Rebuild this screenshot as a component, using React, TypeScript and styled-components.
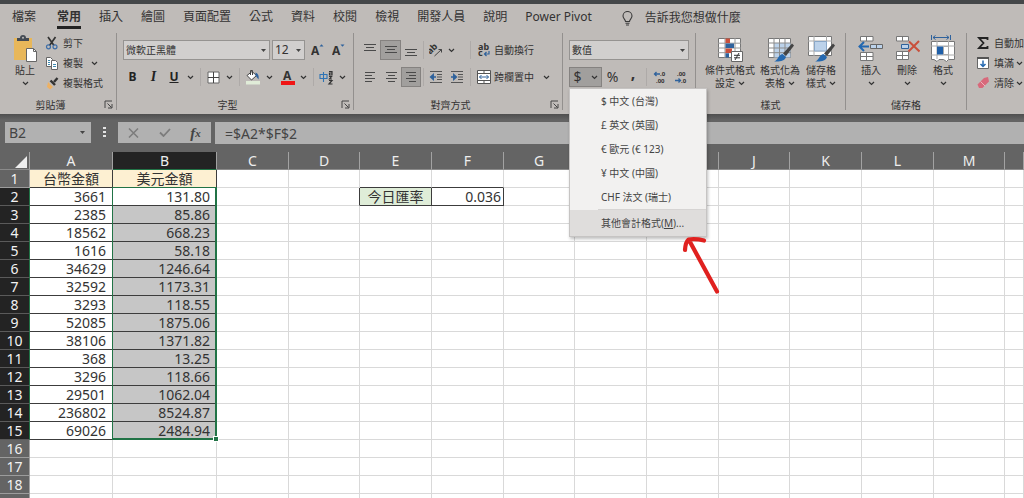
import React from 'react';
import styled, { createGlobalStyle } from 'styled-components';

const GlobalStyle = createGlobalStyle`
  * { box-sizing: border-box; }
  body {
    margin: 0;
    background: #ffffff;
    font-family: "Noto Sans", "Noto Sans CJK TC", sans-serif;
  }
  button, input, select {
    font-family: inherit;
    color: inherit;
    margin: 0;
  }
`;

const ink = '#333232';
const green = '#217346';

/* ---------- shell ---------- */

const Window = styled.div`
  position: relative;
  height: 100vh;
  overflow: hidden;
  display: flex;
  flex-direction: column;
  background: #ffffff;
`;

const TitleStrip = styled.div`
  flex: none;
  height: 4px;
  background: #444749;
`;

const TabBar = styled.nav`
  flex: none;
  display: flex;
  align-items: center;
  gap: 18px;
  height: 28px;
  padding-left: 12px;
  background: #bfbbb8;
  color: ${ink};
`;

const Tab = styled.button<{ $active?: boolean }>`
  border: 0;
  border-bottom: 3px solid ${p => (p.$active ? '#222222' : 'transparent')};
  background: none;
  padding: 0;
  height: 22px;
  line-height: 18px;
  font-size: 12px;
  font-weight: ${p => (p.$active ? 700 : 400)};
  white-space: nowrap;
  &:first-child { margin-right: 3px; }
`;

const TellMe = styled.button`
  display: flex;
  align-items: center;
  gap: 12px;
  border: 0;
  background: none;
  padding: 0;
  margin-left: 12px;
  font-size: 12px;
  line-height: 18px;
  height: 22px;
  white-space: nowrap;
`;

/* ---------- ribbon ---------- */

const Ribbon = styled.div`
  flex: none;
  display: flex;
  height: 82px;
  padding: 1px 0 4px;
  background: #bfbbb8;
  color: ${ink};
  font-size: 10px;
`;

const Group = styled.section<{ $w?: number }>`
  flex: ${p => (p.$w ? 'none' : '1')};
  width: ${p => (p.$w ? `${p.$w}px` : 'auto')};
  min-width: 0;
  display: flex;
  flex-direction: column;
  justify-content: space-between;
  border-right: ${p => (p.$w ? '1px solid #93908e' : '0')};
`;

const GroupFoot = styled.div`
  display: flex;
  align-items: center;
  height: 10px;
  line-height: 10px;
  span { flex: 1; text-align: center; }
`;

const Launcher = styled.button`
  flex: none;
  width: 15px;
  height: 10px;
  border: 0;
  padding: 0;
  background: none;
  display: flex;
  justify-content: center;
`;

const BigRow = styled.div<{ $pad: number }>`
  display: flex;
  align-items: flex-start;
  padding: 2px 0 0 ${p => p.$pad}px;
`;

const BigButton = styled.button<{ $w: number }>`
  flex: none;
  width: ${p => p.$w}px;
  display: flex;
  flex-direction: column;
  align-items: center;
  border: 0;
  padding: 0;
  background: none;
  font-size: 10px;
  line-height: 13px;
  white-space: nowrap;
  > svg { margin-bottom: 2px; }
`;

const Line = styled.span`
  display: flex;
  align-items: center;
  justify-content: center;
  gap: 3px;
  height: 13px;
`;

const ClipboardBody = styled.div`
  display: flex;
  padding-left: 6px;
`;

const PasteWrap = styled.div`
  padding-top: 2px;
`;

const SmallList = styled.div<{ $pad?: number }>`
  display: flex;
  flex-direction: column;
  padding-left: ${p => p.$pad || 0}px;
`;

const SmallButton = styled.button<{ $gap?: number }>`
  display: flex;
  align-items: center;
  height: 20px;
  border: 0;
  padding: 0;
  background: none;
  font-size: 10px;
  line-height: 20px;
  white-space: nowrap;
  > svg:first-child { margin-right: 3px; flex: none; }
  > svg:last-child:not(:first-child) { margin-left: ${p => p.$gap || 0}px; }
`;

const Rows = styled.div`
  display: flex;
  flex-direction: column;
  gap: 7px;
  padding: 7px 0 0 6px;
`;

const Row = styled.div`
  display: flex;
  align-items: center;
  height: 20px;
`;

const Tool = styled.button<{ $w?: number; $on?: boolean }>`
  flex: none;
  display: flex;
  align-items: center;
  justify-content: center;
  width: ${p => (p.$w ? `${p.$w}px` : 'auto')};
  height: 20px;
  padding: 0;
  border: 1px solid ${p => (p.$on ? '#858280' : 'transparent')};
  background: ${p => (p.$on ? '#a19f9d' : 'none')};
  font-size: 12px;
  line-height: 18px;
  b, i, u { font-weight: 700; color: #222222; }
  i { font-family: "Liberation Serif", serif; font-size: 14px; }
`;

const Labelled = styled(Tool)`
  font-size: 10px;
  gap: 3px;
  white-space: nowrap;
  > svg:nth-of-type(2) { margin-left: 6px; }
`;

const Currency = styled(Tool)`
  font-size: 14px;
  gap: 9px;
`;

const Percent = styled(Tool)`
  font-size: 14px;
`;

const Comma = styled(Tool)`
  align-items: flex-start;
  font-size: 16px;
  font-weight: 700;
  line-height: 10px;
`;

const Sep = styled.span<{ $l?: number; $r?: number }>`
  flex: none;
  width: 1px;
  height: 18px;
  margin: 0 ${p => p.$r ?? 3}px 0 ${p => p.$l ?? 3}px;
  background: #aeaaa8;
`;

const Combo = styled.label<{ $w: number }>`
  flex: none;
  position: relative;
  display: flex;
  align-items: center;
  width: ${p => p.$w}px;
  height: 20px;
  border: 1px solid #959391;
  background: #d1cfce;
  margin-right: 2px;
  select {
    appearance: none;
    flex: 1;
    width: 100%;
    height: 18px;
    border: 0;
    padding: 0 12px 0 2px;
    background: transparent;
    line-height: 18px;
  }
  svg { position: absolute; right: 3px; pointer-events: none; }
`;
const FaceSelect = styled.select` font-size: 10px; `;
const SizeSelect = styled.select` font-size: 12px; `;

/* ---------- currency menu ---------- */

const MenuAnchor = styled.div`
  position: relative;
  flex: none;
`;

const Menu = styled.div`
  position: absolute;
  z-index: 10;
  top: 21px;
  left: 0;
  width: 138px;
  border: 1px solid #c6c4c3;
  background: #f2f1f0;
  box-shadow: 1px 2px 3px rgba(0, 0, 0, 0.25);
  color: #444444;
`;

const MenuItem = styled.button<{ $hot?: boolean }>`
  display: block;
  width: 100%;
  height: ${p => (p.$hot ? 26 : 24)}px;
  border: 0;
  padding: 0 0 0 31px;
  background: ${p => (p.$hot ? '#dfdddc' : 'transparent')};
  text-align: left;
  font-size: 10px;
  line-height: 24px;
  white-space: nowrap;
`;

const MenuRule = styled.div`
  height: 1px;
  margin-left: 28px;
  background: #d6d4d3;
`;

/* ---------- formula bar ---------- */

const FormulaBar = styled.div`
  flex: none;
  display: flex;
  align-items: center;
  height: 38px;
  padding: 8px 0 9px 5px;
  background: linear-gradient(#4f4f4f, #646464 6px);
  color: #444444;
`;

const NameBox = styled.div`
  position: relative;
  width: 86px;
  height: 21px;
  display: flex;
  align-items: center;
  background: #b1b1b1;
  svg { position: absolute; right: 6px; }
`;

const Field = styled.input`
  width: 100%;
  height: 21px;
  border: 0;
  padding: 0 4px;
  outline: 0;
  background: transparent;
  font-size: 14px;
  line-height: 20px;
`;

const Grip = styled.div`
  flex: none;
  width: 27px;
  display: flex;
  justify-content: center;
`;

const FxBox = styled.div`
  flex: none;
  display: flex;
  align-items: center;
  width: 93px;
  height: 21px;
  background: #b1b1b1;
  margin-right: 4px;
`;

const FxButton = styled.button`
  flex: 1;
  display: flex;
  justify-content: center;
  align-items: center;
  height: 21px;
  border: 0;
  padding: 0;
  background: none;
  font: italic 700 15px/20px "Liberation Serif", serif;
  sub { font-size: 11px; line-height: 10px; vertical-align: baseline; }
`;

const FormulaField = styled.div`
  flex: 1;
  background: #b1b1b1;
  padding-left: 6px;
`;

/* ---------- sheet ---------- */

const Sheet = styled.table`
  flex: none;
  table-layout: fixed;
  width: 100%;
  border-collapse: separate;
  border-spacing: 0;
  color: #333333;
  font-size: 14px;
  line-height: 17px;
`;

const SizedCol = styled.col<{ $w: number }>`
  width: ${p => p.$w}px;
`;

const ColHead = styled.th<{ $on?: boolean }>`
  height: 18px;
  padding: 0;
  font-weight: 400;
  color: #eeeeee;
  background: ${p => (p.$on ? '#232323' : '#646464')};
  border-right: 1px solid #a2a2a2;
  border-bottom: 1px solid ${p => (p.$on ? green : '#8a8a8a')};
  overflow: hidden;
`;

const Corner = styled(ColHead)`
  svg { display: block; margin: 3px 2px 0 auto; }
`;

const RowHead = styled.th<{ $on?: boolean }>`
  height: 18px;
  padding: 0;
  font-weight: 400;
  color: #f2f2f2;
  background: ${p => (p.$on ? '#232323' : '#646464')};
  border-right: 1px solid ${p => (p.$on ? green : '#a2a2a2')};
  border-bottom: 1px solid ${p => (p.$on ? '#5a5a5a' : '#9c9c9c')};
`;

const Cell = styled.td<{ $fill?: string; $right?: boolean; $bottom?: boolean; $center?: boolean; $pad?: number }>`
  position: relative;
  height: 18px;
  padding: 0 ${p => (p.$center ? 0 : p.$pad ?? 6)}px 0 0;
  text-align: ${p => (p.$center ? 'center' : 'right')};
  background: ${p => p.$fill || '#ffffff'};
  border-right: 1px solid ${p => (p.$right ? '#3c3c3c' : '#d9d9d9')};
  border-bottom: 1px solid ${p => (p.$bottom ? '#3c3c3c' : '#d9d9d9')};
  white-space: nowrap;
`;

const Selection = styled.div`
  position: absolute;
  z-index: 2;
  top: -1px;
  left: -1px;
  right: -1px;
  height: 253px;
  border: 1px solid ${green};
  border-right-width: 2px;
  border-bottom-width: 2px;
  pointer-events: none;
  &::after {
    content: '';
    position: absolute;
    right: -3px;
    bottom: -3px;
    width: 4px;
    height: 4px;
    background: ${green};
    outline: 1px solid #ffffff;
  }
`;

const Annotation = styled.svg`
  position: absolute;
  z-index: 20;
  left: 680px;
  top: 230px;
  pointer-events: none;
`;

/* ---------- icons ---------- */

const Digits = styled.text` font: 700 6px "Noto Sans", sans-serif; fill: #333; `;
const Letters = styled.text` font: 700 9px "Noto Sans", sans-serif; fill: #333; `;
const Capital = styled.text` font: 700 12px "Noto Sans", sans-serif; fill: #333; `;

const Chevron = () => (
  <svg width="7" height="5" viewBox="0 0 7 5"><path d="M1 1l2.500 2.500L6 1" fill="none" stroke="#333" strokeWidth="1.200" /></svg>
);
const Caret = () => (
  <svg width="5" height="3" viewBox="0 0 5 3"><path d="M0 0h5L2.500 3z" fill="#444" /></svg>
);
const LauncherIcon = () => (
  <svg width="9" height="9" viewBox="0 0 9 9"><path d="M1 8V1h7M3.500 3.500l4 4M8 4v4H4" fill="none" stroke="#444" /></svg>
);
const Bulb = () => (
  <svg width="11" height="15" viewBox="0 0 11 15"><path d="M3.500 10.500C3.500 8.500 1 7.500 1 5a4.500 4.500 0 0 1 9 0c0 2.500-2.500 3.500-2.500 5.500zM3.500 12.300h4M4 14h3" fill="none" stroke="#3a3a3a" strokeWidth="1.100" /></svg>
);
const PasteIcon = () => (
  <svg width="26" height="27" viewBox="0 0 26 27">
    <rect x="2" y="3" width="18" height="22" fill="#e8b75a" />
    <path d="M5 6V3h3a3 3 0 0 1 6 0h3v3z" fill="#444b54" />
    <circle cx="11" cy="2.800" r="1" fill="#bfbbb8" />
    <path d="M14.500 13.500h7l3 3v10h-10z" fill="#fff" stroke="#666" />
    <path d="M21.500 13.500v3h3" fill="none" stroke="#666" />
  </svg>
);
const CutIcon = () => (
  <svg width="16" height="14" viewBox="0 0 16 14">
    <path d="M4 1l6 8.500M11.500 1l-6 8.500" stroke="#333" strokeWidth="1.700" />
    <circle cx="4.500" cy="10.800" r="2" fill="none" stroke="#3e6ea8" strokeWidth="1.200" />
    <circle cx="11" cy="10.800" r="2" fill="none" stroke="#3e6ea8" strokeWidth="1.200" />
  </svg>
);
const CopyIcon = () => (
  <svg width="16" height="14" viewBox="0 0 16 14">
    <path d="M2.500 1.500h4l2 2v7h-6z" fill="#fff" stroke="#666" />
    <path d="M7.500 4.500h4l2 2v7h-6z" fill="#fff" stroke="#666" />
    <path d="M4 4.500h2M4 6.500h2M4 8.500h2M9 8.500h3M9 10.500h3" stroke="#3e8ab0" />
  </svg>
);
const PainterIcon = () => (
  <svg width="16" height="14" viewBox="0 0 16 14">
    <path d="M4 6l5 5-3 2.500L3 11z" fill="#eeb163" />
    <path d="M6.500 4.500l4.500 4.500" stroke="#333" strokeWidth="2.400" />
    <path d="M10 6l3.500-4" stroke="#333" strokeWidth="2.400" />
  </svg>
);
const GrowFont = ({ down }: { down?: boolean }) => (
  <svg width="13" height="14" viewBox="0 0 13 14">
    <Capital x="0" y="12">A</Capital>
    <path d={down ? 'M8.500 1.500h4l-2 2.200z' : 'M8.500 3.500h4l-2-2.200z'} fill="#2f629c" />
  </svg>
);
const BorderIcon = () => (
  <svg width="13" height="13" viewBox="0 0 13 13"><path d="M1 1h11v11H1z" fill="#fff" stroke="#666" /><path d="M6.500 1v11M1 6.500h11" stroke="#444" /></svg>
);
const FillIcon = () => (
  <svg width="15" height="16" viewBox="0 0 15 16">
    <path d="M2 6.500l5-4 4.500 4-5 4.500z" fill="#fff" stroke="#444" />
    <path d="M5.500 6V1.500h2V6" fill="none" stroke="#444" />
    <path d="M10.500 3.500q4 1.500 3 7l-3-4z" fill="#2f629c" />
    <rect x="1" y="12" width="14" height="3.500" fill="#e0ecd8" />
  </svg>
);
const FontColorIcon = () => (
  <svg width="15" height="16" viewBox="0 0 15 16">
    <Capital x="3" y="11">A</Capital>
    <rect x="1" y="12" width="14" height="4" fill="#f01515" />
  </svg>
);
const PhoneticIcon = () => (
  <svg width="15" height="15" viewBox="0 0 15 15">
    <path d="M1 4.500h7v4H1zM4.500 2v10" fill="none" stroke="#2f74b5" strokeWidth="1.100" />
    <path d="M10 1.500h3V5h-2.500V3H13M10 6.500h2.500L10.500 9H13M10 10.500h3l-3 3.500h3.500" fill="none" stroke="#333" strokeWidth="1.200" />
  </svg>
);
const AlignIcon = ({ lines, y }: { lines: [number, number][]; y: number }) => (
  <svg width="14" height="14" viewBox="0 0 14 14">
    {lines.map(([a, b], i) => <path key={i} d={`M${a} ${y + i * 3}H${b}`} stroke="#4a4a4a" />)}
  </svg>
);
const OrientIcon = () => (
  <svg width="14" height="14" viewBox="0 0 14 14">
    <g transform="rotate(-45 4 9)"><Letters x="0" y="9">ab</Letters></g>
    <path d="M5.500 13l7-6.500M9.500 6.500h3v3" fill="none" stroke="#444" />
  </svg>
);
const IndentIcon = ({ out }: { out?: boolean }) => (
  <svg width="14" height="14" viewBox="0 0 14 14">
    <path d="M1 1.500h12M8 4.500h5M8 7h5M8 9.500h5M1 12.500h12" stroke="#555" />
    <path d={out ? 'M7 7H2M4.300 4.500L1.500 7l2.800 2.500z' : 'M1 7h5M3.700 4.500L6.500 7l-2.800 2.500z'} fill="#2f629c" stroke="#2f629c" strokeWidth="1.300" />
  </svg>
);
const WrapIcon = () => (
  <svg width="14" height="14" viewBox="0 0 14 14">
    <Letters x="1" y="7">ab</Letters>
    <Letters x="1" y="13">c</Letters>
    <path d="M12 8v3H7.500M9.500 9l-2 2 2 2" fill="none" stroke="#2f629c" strokeWidth="1.200" />
  </svg>
);
const MergeIcon = () => (
  <svg width="14" height="14" viewBox="0 0 14 14">
    <path d="M.5.500h13v13H.500z" fill="#fff" stroke="#555" />
    <path d="M.5 3.500h13M.5 10.500h13M7 .5v3M7 10.500v3" stroke="#555" />
    <path d="M2.500 7h9M4.500 5L2.500 7l2 2M9.500 5l2 2-2 2" fill="none" stroke="#2f629c" />
  </svg>
);
const DecimalIcon = ({ more }: { more?: boolean }) => (
  <svg width="14" height="14" viewBox="0 0 14 14">
    <Digits x={more ? 7 : 3} y="6">{more ? '.0' : '.00'}</Digits>
    <Digits x={more ? 3 : 7} y="13">{more ? '.00' : '.0'}</Digits>
    <path d={more ? 'M7 4H1.500M3.500 2L1.500 4l2 2' : 'M1 10.500h5.500M4.500 8.500l2 2-2 2'} fill="none" stroke="#2f629c" strokeWidth="1.300" />
  </svg>
);
const CondIcon = () => (
  <svg width="26" height="27" viewBox="0 0 26 27">
    <path d="M1.500 3.500h22v19h-22z" fill="#fff" stroke="#777" />
    <path d="M1 8.200h23M1 13h23M1 17.700h23M8 3v20M18 3v20" stroke="#999" />
    <path d="M8.500 3.500H13v4.500H8.500zM8.500 13.500H15v4.500H8.500z" fill="#c9503c" />
    <path d="M8.500 8.500H17v4.500H8.500zM8.500 18.200H12v4.300H8.500z" fill="#2f629c" />
    <path d="M14.500 16.500h11v10h-11z" fill="#fff" stroke="#666" />
    <path d="M17 20.300h6M17 22.800h6M22 18l-4 7" stroke="#333" />
  </svg>
);
const Brush = () => (
  <g>
    <path d="M26 8.500l2 2-8 10.500-3-2.500z" fill="#444" />
    <path d="M16.500 19l3.500 3c-1.500 4-6 5-12 4.500 4-1 4-6.500 8.500-7.500z" fill="#2468b0" />
  </g>
);
const TableIcon = () => (
  <svg width="28" height="27" viewBox="0 0 28 27">
    <path d="M2.500 3.500h22v19h-22z" fill="#fff" stroke="#777" />
    <path d="M8 8h16.500v14.500H8z" fill="#bcd2ea" />
    <path d="M2 8h23M2 13h23M2 17.700h23M8 3v20M13.500 3v20M19 3v20" stroke="#8b8b8b" />
    <Brush />
  </svg>
);
const CellStyleIcon = () => (
  <svg width="28" height="27" viewBox="0 0 28 27">
    <path d="M1.500 1.500h23v19h-23z" fill="#fff" stroke="#777" />
    <path d="M1 6h24M1 16h24M7 1v20M19.500 1v20" stroke="#aaa" />
    <path d="M7.500 6.500h12v9.500h-12z" fill="#bcd2ea" stroke="#8aa7c7" />
    <Brush />
  </svg>
);
const InsertIcon = () => (
  <svg width="26" height="27" viewBox="0 0 26 27">
    <g fill="#fff" stroke="#777"><path d="M2.500 1.500h12.500v4.500H2.500zM2.500 17.500h12.500v8H2.500z" /><path d="M8.500 1.500v4.500M8.500 17.500v8M2.500 21.500H15" /></g>
    <path d="M12.500 9.500h12v4h-12z" fill="#bcd2ea" stroke="#666" /><path d="M18.500 9.500v4" stroke="#666" />
    <path d="M11 11.500H2M6 7l-4.500 4.500L6 16" fill="none" stroke="#2468b0" strokeWidth="2" />
  </svg>
);
const DeleteIcon = () => (
  <svg width="26" height="27" viewBox="0 0 26 27">
    <g fill="#fff" stroke="#777"><path d="M2.500 1.500h12v4.500h-12zM2.500 16.500h12v8h-12z" /><path d="M8.500 1.500v4.500M8.500 16.500v8M2.500 20.500h12" /></g>
    <path d="M7.500 9.500h7v4h-7z" fill="#bcd2ea" stroke="#2f629c" />
    <path d="M15 6.500l10.500 10M25 6L14.500 16.500" stroke="#c9503c" strokeWidth="2" />
  </svg>
);
const FormatIcon = () => (
  <svg width="26" height="27" viewBox="0 0 26 27">
    <path d="M1.500 0v5M20.500 0v5M3 2.500h16M5.500.500L3 2.500l2.500 2M16.500.500l2.500 2-2.500 2" fill="none" stroke="#2f629c" />
    <path d="M1.500 6.500h23v18h-6l-2 2-3-2H9l-2 2-3-2H1.500z" fill="#fff" stroke="#777" />
    <path d="M1 11h24M1 20h24M7 6v18M18.500 6v18" stroke="#aaa" />
    <path d="M7 11.500h6.500v8H7z" fill="#1f5fa8" />
    <path d="M13.500 11.500h5v8h-5z" fill="#fff" stroke="#aaa" />
  </svg>
);
const SigmaIcon = () => (
  <svg width="16" height="14" viewBox="0 0 16 14"><path d="M12.500 4V2H4l4.500 5L4 12h8.500v-2" fill="none" stroke="#222" strokeWidth="1.800" /></svg>
);
const FillDownIcon = () => (
  <svg width="16" height="14" viewBox="0 0 16 14"><path d="M2.500 1.500h11v11h-11z" fill="#fff" stroke="#666" /><path d="M2 2h12" stroke="#555" strokeWidth="2" /><path d="M8 4.500v6M5.500 8L8 10.500 10.500 8" fill="none" stroke="#2468b0" strokeWidth="1.500" /></svg>
);
const EraserIcon = () => (
  <svg width="16" height="14" viewBox="0 0 16 14"><path d="M9 2l4-1 1 4.500L7.500 12H4L2.500 8.500z" fill="#d8697b" /><path d="M5.500 5.500l4.500 4.500" stroke="#f0b5bd" /></svg>
);

/* ---------- data ---------- */

const tabs = ['檔案', '常用', '插入', '繪圖', '頁面配置', '公式', '資料', '校閱', '檢視', '開發人員', '說明', 'Power Pivot'];
const currencies = ['$ 中文 (台灣)', '£ 英文 (英國)', '€ 歐元 (€ 123)', '¥ 中文 (中國)', 'CHF 法文 (瑞士)'];
const columns: [string, number][] = [
  ['A', 83], ['B', 104], ['C', 72], ['D', 71], ['E', 72], ['F', 72], ['G', 71],
  ['H', 72], ['I', 72], ['J', 71], ['K', 72], ['L', 72], ['M', 71],
];
const amounts: [string, string][] = [
  ['3661', '131.80'], ['2385', '85.86'], ['18562', '668.23'], ['1616', '58.18'],
  ['34629', '1246.64'], ['32592', '1173.31'], ['3293', '118.55'], ['52085', '1875.06'],
  ['38106', '1371.82'], ['368', '13.25'], ['3296', '118.66'], ['29501', '1062.04'],
  ['236802', '8524.87'], ['69026', '2484.94'],
];
const rowNumbers = Array.from({ length: 19 }, (_, i) => i + 1);

const spread: [number, number][] = [[1, 13], [3, 11], [1, 13]];

const SheetCell = ({ col, row }: { col: string; row: number }) => {
  if (col === 'A' || col === 'B') {
    if (row === 1) {
      return <Cell $center $fill="#fdf0d2" $right $bottom>{col === 'A' ? '台幣金額' : '美元金額'}</Cell>;
    }
    const pair = amounts[row - 2];
    if (pair) {
      return col === 'A'
        ? <Cell $right $bottom>{pair[0]}</Cell>
        : <Cell $bottom $fill={row > 2 ? '#c6c6c6' : undefined}>{pair[1]}{row === 2 && <Selection />}</Cell>;
    }
  }
  if (row === 2 && col === 'E') return <Cell $center $fill="#dfedd8" $right $bottom>今日匯率</Cell>;
  if (row === 2 && col === 'F') return <Cell $right $bottom $pad={2}>0.036</Cell>;
  return <Cell $right={row === 2 && col === 'D'} $bottom={row === 1 && (col === 'E' || col === 'F')} />;
};

export default function App() {
  return (
    <Window>
      <GlobalStyle />
      <TitleStrip />
      <TabBar>
        {tabs.map(t => <Tab key={t} $active={t === '常用'}>{t}</Tab>)}
        <TellMe><Bulb />告訴我您想做什麼</TellMe>
      </TabBar>

      <Ribbon>
        <Group $w={117}>
          <ClipboardBody>
            <PasteWrap>
              <BigButton $w={38}><PasteIcon /><Line>貼上</Line><Line><Chevron /></Line></BigButton>
            </PasteWrap>
            <SmallList>
              <SmallButton><CutIcon />剪下</SmallButton>
              <SmallButton $gap={8}><CopyIcon />複製<Chevron /></SmallButton>
              <SmallButton><PainterIcon />複製格式</SmallButton>
            </SmallList>
          </ClipboardBody>
          <GroupFoot><span>剪貼簿</span><Launcher aria-label="剪貼簿"><LauncherIcon /></Launcher></GroupFoot>
        </Group>

        <Group $w={237}>
          <Rows>
            <Row>
              <Combo $w={147}><FaceSelect aria-label="字型"><option>微軟正黑體</option></FaceSelect><Caret /></Combo>
              <Combo $w={33}><SizeSelect aria-label="字型大小"><option>12</option></SizeSelect><Caret /></Combo>
              <Tool $w={21} aria-label="放大字型"><GrowFont /></Tool>
              <Tool $w={20} aria-label="縮小字型"><GrowFont down /></Tool>
            </Row>
            <Row>
              <Tool $w={19}><b>B</b></Tool>
              <Tool $w={23}><i>I</i></Tool>
              <Tool $w={18}><u>U</u></Tool>
              <Tool $w={14} aria-label="底線"><Chevron /></Tool>
              <Sep />
              <Tool $w={18} aria-label="框線"><BorderIcon /></Tool>
              <Tool $w={14} aria-label="框線選項"><Chevron /></Tool>
              <Sep />
              <Tool $w={18} aria-label="填滿色彩"><FillIcon /></Tool>
              <Tool $w={16} aria-label="填滿選項"><Chevron /></Tool>
              <Tool $w={20} aria-label="字型色彩"><FontColorIcon /></Tool>
              <Tool $w={13} aria-label="色彩選項"><Chevron /></Tool>
              <Sep />
              <Tool $w={18} aria-label="注音"><PhoneticIcon /></Tool>
              <Tool $w={14} aria-label="注音選項"><Chevron /></Tool>
            </Row>
          </Rows>
          <GroupFoot><span>字型</span><Launcher aria-label="字型設定"><LauncherIcon /></Launcher></GroupFoot>
        </Group>

        <Group $w={209}>
          <Rows>
            <Row>
              <Tool $w={20} aria-label="靠上"><AlignIcon y={1.5} lines={spread} /></Tool>
              <Tool $w={21} $on aria-label="置中對齊"><AlignIcon y={3.5} lines={spread} /></Tool>
              <Tool $w={20} aria-label="靠下"><AlignIcon y={6.5} lines={spread} /></Tool>
              <Sep $l={2} $r={2} />
              <Tool $w={20} aria-label="方向"><OrientIcon /></Tool>
              <Tool $w={10} aria-label="方向選項"><Chevron /></Tool>
              <Sep $l={14} $r={5} />
              <Labelled><WrapIcon />自動換行</Labelled>
            </Row>
            <Row>
              <Tool $w={20} aria-label="靠左"><AlignIcon lines={[[2, 12], [2, 9], [2, 12], [2, 9]]} y={2.5} /></Tool>
              <Tool $w={21} aria-label="置中"><AlignIcon lines={[[2, 13], [4, 11], [2, 13], [4, 11]]} y={2.5} /></Tool>
              <Tool $w={20} $on aria-label="靠右"><AlignIcon lines={[[2, 12], [5, 12], [2, 12], [5, 12]]} y={2.5} /></Tool>
              <Sep $l={2} $r={2} />
              <Tool $w={20} aria-label="減少縮排"><IndentIcon out /></Tool>
              <Tool $w={21} aria-label="增加縮排"><IndentIcon /></Tool>
              <Sep $l={3} $r={5} />
              <Labelled><MergeIcon />跨欄置中<Chevron /></Labelled>
            </Row>
          </Rows>
          <GroupFoot><span>對齊方式</span><Launcher aria-label="對齊設定"><LauncherIcon /></Launcher></GroupFoot>
        </Group>

        <Group $w={133}>
          <Rows>
            <Row>
              <Combo $w={120}><FaceSelect aria-label="數值格式"><option>數值</option></FaceSelect><Caret /></Combo>
            </Row>
            <Row>
              <MenuAnchor>
                <Currency $w={33} $on>$<Chevron /></Currency>
                <Menu role="menu">
                  {currencies.map(c => <MenuItem key={c} role="menuitem">{c}</MenuItem>)}
                  <MenuRule />
                  <MenuItem role="menuitem" $hot>其他會計格式(<u>M</u>)...</MenuItem>
                </Menu>
              </MenuAnchor>
              <Percent $w={21}>%</Percent>
              <Comma $w={20}>,</Comma>
              <Sep />
              <Tool $w={20} aria-label="增加小數位數"><DecimalIcon more /></Tool>
              <Tool $w={21} aria-label="減少小數位數"><DecimalIcon /></Tool>
            </Row>
          </Rows>
        </Group>

        <Group $w={150}>
          <BigRow $pad={8}>
            <BigButton $w={52}><CondIcon /><Line>條件式格式</Line><Line>設定<Chevron /></Line></BigButton>
            <BigButton $w={48}><TableIcon /><Line>格式化為</Line><Line>表格<Chevron /></Line></BigButton>
            <BigButton $w={34}><CellStyleIcon /><Line>儲存格</Line><Line>樣式<Chevron /></Line></BigButton>
          </BigRow>
          <GroupFoot><span>樣式</span></GroupFoot>
        </Group>

        <Group $w={121}>
          <BigRow $pad={7}>
            <BigButton $w={36}><InsertIcon /><Line>插入</Line><Line><Chevron /></Line></BigButton>
            <BigButton $w={36}><DeleteIcon /><Line>刪除</Line><Line><Chevron /></Line></BigButton>
            <BigButton $w={36}><FormatIcon /><Line>格式</Line><Line><Chevron /></Line></BigButton>
          </BigRow>
          <GroupFoot><span>儲存格</span></GroupFoot>
        </Group>

        <Group>
          <SmallList $pad={8}>
            <SmallButton><SigmaIcon />自動加</SmallButton>
            <SmallButton $gap={2}><FillDownIcon />填滿<Chevron /></SmallButton>
            <SmallButton $gap={2}><EraserIcon />清除<Chevron /></SmallButton>
          </SmallList>
        </Group>
      </Ribbon>

      <FormulaBar>
        <NameBox><Field aria-label="名稱方塊" defaultValue="B2" /><Caret /></NameBox>
        <Grip>
          <svg width="3" height="11" viewBox="0 0 3 11"><path d="M0 0h3v2H0zM0 4h3v2H0zM0 8h3v2H0z" fill="#e4e4e4" /></svg>
        </Grip>
        <FxBox>
          <FxButton aria-label="取消"><svg width="11" height="10" viewBox="0 0 11 10"><path d="M1 .5l9 9M10 .5l-9 9" stroke="#7c7c7c" strokeWidth="1.500" /></svg></FxButton>
          <FxButton aria-label="輸入"><svg width="12" height="9" viewBox="0 0 12 9"><path d="M1 4.500l3.500 3.500L11 1" fill="none" stroke="#7c7c7c" strokeWidth="1.800" /></svg></FxButton>
          <FxButton>f<sub>x</sub></FxButton>
        </FxBox>
        <FormulaField><Field aria-label="資料編輯列" defaultValue="=$A2*$F$2" /></FormulaField>
      </FormulaBar>

      <Sheet>
        <colgroup>
          <SizedCol $w={30} />
          {columns.map(([c, w]) => <SizedCol key={c} $w={w} />)}
          <col />
        </colgroup>
        <thead>
          <tr>
            <Corner aria-label="全選"><svg width="12" height="12" viewBox="0 0 12 12"><path d="M12 0v12H0z" fill="#eeeeee" /></svg></Corner>
            {columns.map(([c]) => <ColHead key={c} $on={c === 'B'}>{c}</ColHead>)}
            <ColHead />
          </tr>
        </thead>
        <tbody>
          {rowNumbers.map(r => (
            <tr key={r}>
              <RowHead $on={r > 1 && r < 16}>{r}</RowHead>
              {columns.map(([c]) => <SheetCell key={c} col={c} row={r} />)}
              <Cell />
            </tr>
          ))}
        </tbody>
      </Sheet>

      <Annotation width="44" height="68" viewBox="0 0 44 68">
        <path d="M37 61.500L9.500 11M5 20Q5.500 12 8.500 9.500Q16 8.500 24 10.500" fill="none" stroke="#e0211f" strokeWidth="4.200" strokeLinecap="round" strokeLinejoin="round" />
      </Annotation>
    </Window>
  );
}
